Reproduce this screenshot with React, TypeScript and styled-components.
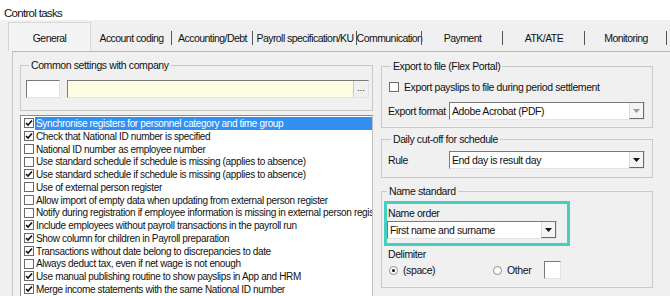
import React from "react"
import styled, { createGlobalStyle } from "styled-components"

const GlobalStyle = createGlobalStyle`
    html, body {
        margin: 0;
        padding: 0;
        background: #ffffff;
    }
    body {
        font-family: "Liberation Sans", Arial, sans-serif;
        font-size: 10.5px;
        letter-spacing: -0.4px;
        color: #111;
    }
`

interface CheckItemI {
    label: string,
    checked: boolean,
    selected?: boolean,
}

const settings: CheckItemI[] = [
    { label: "Synchronise registers for personnel category and time group", checked: true, selected: true },
    { label: "Check that National ID number is specified", checked: true },
    { label: "National ID number as employee number", checked: false },
    { label: "Use standard schedule if schedule is missing (applies to absence)", checked: false },
    { label: "Use standard schedule if schedule is missing (applies to absence)", checked: true },
    { label: "Use of external person register", checked: false },
    { label: "Allow import of empty data when updating from external person register", checked: false },
    { label: "Notify during registration if employee information is missing in external person register", checked: false },
    { label: "Include employees without payroll transactions in the payroll run", checked: true },
    { label: "Show column for children in Payroll preparation", checked: true },
    { label: "Transactions without date belong to discrepancies to date", checked: true },
    { label: "Always deduct tax, even if net wage is not enough", checked: false },
    { label: "Use manual publishing routine to show payslips in App and HRM", checked: true },
    { label: "Merge income statements with the same National ID number", checked: true },
]

const tabs = [
    { label: "General", width: 83 },
    { label: "Account coding", width: 81 },
    { label: "Accounting/Debt", width: 81 },
    { label: "Payroll specification/KU", width: 104 },
    { label: "Communication", width: 65 },
    { label: "Payment", width: 81 },
    { label: "ATK/ATE", width: 82 },
    { label: "Monitoring", width: 82 },
]

const CheckMark = () => (
    <svg width="8" height="8" viewBox="0 0 8 8">
        <path d="M1 4 L3 6 L7 1.5" fill="none" stroke="#111" strokeWidth="1.6" />
    </svg>
)

const Arrow = ({ faded }: { faded?: boolean }) => (
    <svg width="7" height="4" viewBox="0 0 7 4">
        <path d="M0 0 H7 L3.5 4 Z" fill={faded ? "#9a9a9a" : "#111"} />
    </svg>
)

const Select = ({ value, faded }: { value: string, faded?: boolean }) => (
    <SelectBox>
        <SelectValue>{value}</SelectValue>
        <SelectButton><Arrow faded={faded} /></SelectButton>
    </SelectBox>
)

export default function App() {
    return (
        <Window>
            <GlobalStyle />
            <Title>Control tasks</Title>
            <Frame>
                <TabStrip>
                    {tabs.map((t, i) => (
                        <Tab key={t.label} active={i === 0} style={{ width: t.width }}>{t.label}</Tab>
                    ))}
                </TabStrip>
                <Panel>
                    <LeftColumn>
                        <CommonGroup>
                            <Legend>Common settings with company</Legend>
                            <CompanyRow>
                                <CodeInput />
                                <NameInput>
                                    <DotsButton>...</DotsButton>
                                </NameInput>
                            </CompanyRow>
                        </CommonGroup>
                        <ListBox>
                            {settings.map((s, i) => (
                                <ListRow key={i}>
                                    <CheckBox>{s.checked && <CheckMark />}</CheckBox>
                                    <RowLabel selected={s.selected}>{s.label}</RowLabel>
                                </ListRow>
                            ))}
                        </ListBox>
                    </LeftColumn>
                    <RightColumn>
                        <ExportGroup>
                            <Legend>Export to file (Flex Portal)</Legend>
                            <CheckLine>
                                <CheckBox />
                                <span>Export payslips to file during period settlement</span>
                            </CheckLine>
                            <FieldLine>
                                <FieldLabel>Export format</FieldLabel>
                                <Select value="Adobe Acrobat (PDF)" faded />
                            </FieldLine>
                        </ExportGroup>
                        <CutoffGroup>
                            <Legend>Daily cut-off for schedule</Legend>
                            <FieldLine>
                                <FieldLabel>Rule</FieldLabel>
                                <Select value="End day is result day" />
                            </FieldLine>
                        </CutoffGroup>
                        <NameGroup>
                            <Legend>Name standard</Legend>
                            <Highlight>
                                <HighlightLabel>Name order</HighlightLabel>
                                <Select value="First name and surname" />
                            </Highlight>
                            <Delimiter>Delimiter</Delimiter>
                            <RadioLine>
                                <RadioOption>
                                    <Radio checked />
                                    <span>(space)</span>
                                </RadioOption>
                                <RadioOption last>
                                    <Radio />
                                    <span>Other</span>
                                </RadioOption>
                                <SmallInput />
                            </RadioLine>
                        </NameGroup>
                    </RightColumn>
                </Panel>
            </Frame>
        </Window>
    )
}

const Window = styled.div`
    width: 670px;
    height: 296px;
    overflow: hidden;
    display: flex;
    flex-direction: column;
`

const Title = styled.div`
    height: 20px;
    padding-left: 4px;
    font-size: 11.5px;
    letter-spacing: -0.7px;
    line-height: 26px;
`

const Frame = styled.div`
    flex: 1;
    background: #f0f0f0;
    padding: 2px 0 0 8px;
    display: flex;
    flex-direction: column;
`

const TabStrip = styled.div`
    display: flex;
    height: 29px;
`

const Tab = styled.div<{ active?: boolean }>`
    position: relative;
    display: flex;
    align-items: center;
    justify-content: center;
    font-size: 10.5px;
    letter-spacing: -0.55px;
    background: ${props => props.active ? "#f4f4f4" : "transparent"};
    border: 1px solid ${props => props.active ? "#d6d6d6" : "transparent"};
    border-bottom: none;
    box-sizing: border-box;
    white-space: nowrap;
    padding-top: 1px;

    &::after {
        content: "";
        position: absolute;
        right: -1px;
        top: 8px;
        height: 14px;
        border-right: 1px solid ${props => props.active ? "transparent" : "#555"};
    }
`

const Panel = styled.div`
    flex: 1;
    margin-left: 4px;
    border-top: 1px solid #b9b9b9;
    border-left: 1px solid #c8c8c8;
    padding: 7px 0 0 7px;
    display: grid;
    grid-template-columns: 353px 272px;
    column-gap: 8px;
    align-items: start;
`

const LeftColumn = styled.div`
    display: flex;
    flex-direction: column;
    gap: 4px;
`

const RightColumn = styled.div`
    display: flex;
    flex-direction: column;
    padding-top: 1px;
`

const Group = styled.fieldset`
    margin: 0;
    border: 1px solid #c9c9c9;
    min-width: 0;
`

const CommonGroup = styled(Group)`
    padding: 9px 3px 12px 5px;
`

const ExportGroup = styled(Group)`
    padding: 9px 7px 7px 6px;
    display: flex;
    flex-direction: column;
    gap: 9px;
`

const CutoffGroup = styled(Group)`
    margin-top: 5px;
    padding: 6px 7px 8px 6px;
`

const NameGroup = styled(Group)`
    margin-top: 7px;
    padding: 4px 7px 8px 2px;
`

const Legend = styled.legend`
    padding: 0 2px;
    margin-left: 3px;
    line-height: 12px;
`

const CompanyRow = styled.div`
    display: flex;
    gap: 7px;
`

const Sunken = styled.div`
    box-sizing: border-box;
    height: 18px;
    border-top: 1px solid #7a7a7a;
    border-left: 1px solid #7a7a7a;
    border-bottom: 1px solid #e3e3e3;
    border-right: 1px solid #e3e3e3;
    background: #ffffff;
`

const CodeInput = styled(Sunken)`
    width: 34px;
`

const NameInput = styled(Sunken)`
    flex: 1;
    background: #fdfde2;
    display: flex;
    justify-content: flex-end;
`

const DotsButton = styled.div`
    width: 14px;
    border-left: 1px solid #c8c8c8;
    background: #f0f0f0;
    font-size: 9px;
    letter-spacing: 0;
    text-align: center;
    line-height: 14px;
`

const ListBox = styled.div`
    height: 190px;
    background: #ffffff;
    border-top: 1px solid #8a8a8a;
    border-left: 1px solid #8a8a8a;
    border-right: 1px solid #c0c0c0;
    padding-top: 1px;
    overflow: hidden;
`

const ListRow = styled.div`
    display: flex;
    align-items: center;
    height: 12.75px;
    padding-left: 3px;
    font-size: 10px;
    letter-spacing: -0.35px;
`

const CheckBox = styled.div`
    box-sizing: border-box;
    flex: none;
    width: 10px;
    height: 10px;
    border: 1px solid #6a6a6a;
    background: #ffffff;
    display: flex;
    align-items: center;
    justify-content: center;
    margin-right: 1px;
`

const RowLabel = styled.div<{ selected?: boolean }>`
    flex: 1;
    height: 100%;
    padding-left: 1px;
    line-height: 13px;
    white-space: nowrap;
    overflow: hidden;
    background: ${props => props.selected ? "#3390f0" : "transparent"};
    color: ${props => props.selected ? "#ffffff" : "#111"};
`

const CheckLine = styled.div`
    display: flex;
    align-items: center;
    gap: 4px;
    height: 12px;
    padding-left: 1px;
    white-space: nowrap;
`

const FieldLine = styled.div`
    display: flex;
    align-items: center;
`

const FieldLabel = styled.div`
    width: 61px;
    white-space: nowrap;
`

const SelectBox = styled(Sunken)`
    flex: 1;
    display: flex;
    align-items: stretch;
`

const SelectValue = styled.div`
    flex: 1;
    padding-left: 2px;
    line-height: 16px;
    white-space: nowrap;
`

const SelectButton = styled.div`
    width: 15px;
    background: #f4f4f4;
    border-left: 1px solid #dcdcdc;
    border-bottom: 1px solid #6a6a6a;
    border-right: 1px solid #6a6a6a;
    box-sizing: border-box;
    display: flex;
    align-items: center;
    justify-content: center;
`

const Highlight = styled.div`
    width: 186px;
    box-sizing: border-box;
    border: 3px solid #45cfc0;
    padding: 3px 10px 4px 0;
    display: flex;
    flex-direction: column;
    gap: 2px;
`

const HighlightLabel = styled.div`
    padding-left: 1px;
    line-height: 12px;
`

const Delimiter = styled.div`
    padding: 2px 0 0 4px;
    line-height: 12px;
`

const RadioLine = styled.div`
    display: flex;
    align-items: center;
    padding: 1px 0 0 5px;
`

const RadioOption = styled.div<{ last?: boolean }>`
    display: flex;
    align-items: center;
    gap: 5px;
    width: ${props => props.last ? "auto" : "104px"};
    margin-right: ${props => props.last ? "13px" : "0"};
`

const Radio = styled.div<{ checked?: boolean }>`
    box-sizing: border-box;
    width: 9px;
    height: 9px;
    border-radius: 50%;
    border: 1px solid #8a8a8a;
    background: #ffffff;
    display: flex;
    align-items: center;
    justify-content: center;

    &::after {
        content: "";
        width: 3px;
        height: 3px;
        border-radius: 50%;
        background: ${props => props.checked ? "#111" : "transparent"};
    }
`

const SmallInput = styled(Sunken)`
    width: 17px;
`
